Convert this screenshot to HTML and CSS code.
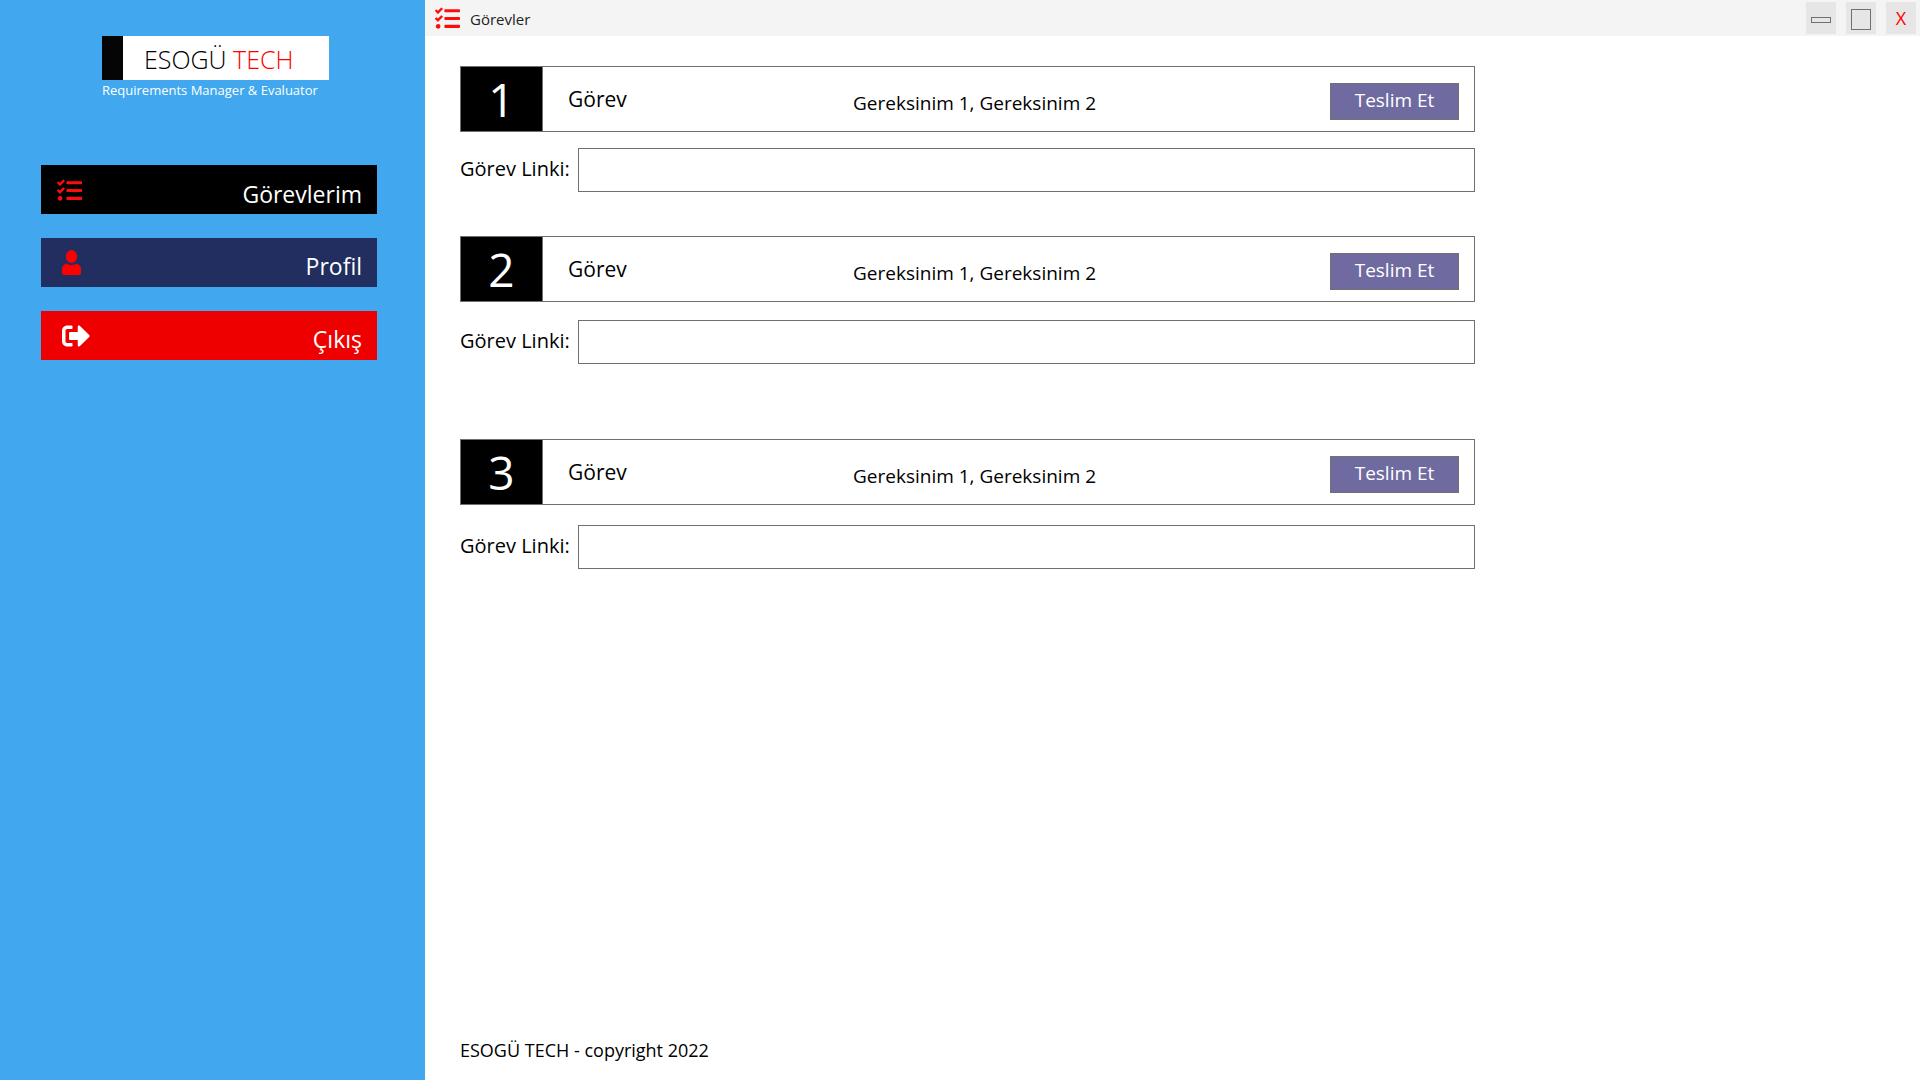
FILE: index.html
```html
<!DOCTYPE html>
<html lang="tr">
<head>
<meta charset="utf-8">
<title>Görevler</title>
<link rel="stylesheet" href="styles.css">
</head>
<body>
<svg class="sprite" aria-hidden="true">
  <symbol id="tasks" viewBox="0 0 512 512"><path d="M139.61 35.5a12 12 0 0 0-17 0L58.93 98.81l-22.7-22.12a12 12 0 0 0-17 0L3.53 92.41a12 12 0 0 0 0 17l47.59 47.4a12.78 12.78 0 0 0 17.61 0l15.59-15.62L156.52 69a12.09 12.09 0 0 0 .09-17zm0 159.19a12 12 0 0 0-17 0l-63.68 63.72-22.7-22.1a12 12 0 0 0-17 0L3.53 252a12 12 0 0 0 0 17L51 316.5a12.77 12.77 0 0 0 17.6 0l15.7-15.69 72.2-72.22a12 12 0 0 0 .09-16.9zM64 368c-26.49 0-48.59 21.5-48.59 48S37.53 464 64 464a48 48 0 0 0 0-96zm432 16H208a16 16 0 0 0-16 16v32a16 16 0 0 0 16 16h288a16 16 0 0 0 16-16v-32a16 16 0 0 0-16-16zm0-320H208a16 16 0 0 0-16 16v32a16 16 0 0 0 16 16h288a16 16 0 0 0 16-16V80a16 16 0 0 0-16-16zm0 160H208a16 16 0 0 0-16 16v32a16 16 0 0 0 16 16h288a16 16 0 0 0 16-16v-32a16 16 0 0 0-16-16z"/></symbol>
  <symbol id="user" viewBox="0 0 19 25"><ellipse cx="9.5" cy="6.5" rx="5.6" ry="6.5"/><path d="M5.2 13.8C2 13.8 0 16.2 0 19.3V22.6C0 24 .9 25 2.2 25H16.8C18.1 25 19 24 19 22.6V19.3C19 16.2 17 13.8 13.8 13.8C12.5 14.8 11 15.2 9.5 15.2S6.5 14.8 5.2 13.8Z"/></symbol>
  <symbol id="exit" viewBox="0 0 512 512"><path d="M497 273L329 441c-15 15-41 4.500-41-17v-96H152c-13.300 0-24-10.700-24-24v-96c0-13.300 10.700-24 24-24h136V88c0-21.400 25.900-32 41-17l168 168c9.300 9.400 9.300 24.600 0 34zM192 436v-40c0-6.600-5.400-12-12-12H96c-17.700 0-32-14.300-32-32V160c0-17.700 14.300-32 32-32h84c6.600 0 12-5.400 12-12V76c0-6.600-5.400-12-12-12H96c-53 0-96 43-96 96v192c0 53 43 96 96 96h84c6.600 0 12-5.400 12-12z"/></symbol>
</svg>
<div class="app">
  <aside class="sidebar">
    <div class="brand">
      <div class="logo"><span>ESOGÜ <span class="accent">TECH</span></span></div>
      <p class="tagline">Requirements Manager &amp; Evaluator</p>
    </div>
    <nav class="menu">
      <button type="button" class="item item-tasks"><svg class="icon"><use href="#tasks"/></svg><span>Görevlerim</span></button>
      <button type="button" class="item item-profile"><svg class="icon icon-user"><use href="#user"/></svg><span>Profil</span></button>
      <button type="button" class="item item-exit"><svg class="icon icon-exit"><use href="#exit"/></svg><span>Çıkış</span></button>
    </nav>
  </aside>
  <div class="window">
    <header class="titlebar">
      <svg class="icon"><use href="#tasks"/></svg>
      <h1>Görevler</h1>
      <div class="controls">
        <button type="button" aria-label="Küçült"><span class="minimize"></span></button>
        <button type="button" aria-label="Büyüt"><span class="maximize"></span></button>
        <button type="button" class="close" aria-label="Kapat">X</button>
      </div>
    </header>
    <main class="content">
      <section class="task task-1">
        <div class="card">
          <span class="number">1</span>
          <h2>Görev</h2>
          <p>Gereksinim 1, Gereksinim 2</p>
          <button type="button" class="submit">Teslim Et</button>
        </div>
        <div class="link-row"><label for="link1">Görev Linki:</label><input type="text" id="link1"></div>
      </section>
      <section class="task task-2">
        <div class="card">
          <span class="number">2</span>
          <h2>Görev</h2>
          <p>Gereksinim 1, Gereksinim 2</p>
          <button type="button" class="submit">Teslim Et</button>
        </div>
        <div class="link-row"><label for="link2">Görev Linki:</label><input type="text" id="link2"></div>
      </section>
      <section class="task task-3">
        <div class="card">
          <span class="number">3</span>
          <h2>Görev</h2>
          <p>Gereksinim 1, Gereksinim 2</p>
          <button type="button" class="submit">Teslim Et</button>
        </div>
        <div class="link-row"><label for="link3">Görev Linki:</label><input type="text" id="link3"></div>
      </section>
    </main>
    <footer class="footer">ESOGÜ TECH - copyright 2022</footer>
  </div>
</div>
</body>
</html>
```
FILE: styles.css
```css
* { box-sizing: border-box; }
body, h1, h2, p { margin: 0; font-weight: 400; }
body { font-family: "Open Sans", "Noto Sans", sans-serif; color: #000; background: #fff; }
button, input { font: inherit; border: 0; border-radius: 0; }
button { cursor: pointer; }
.sprite { display: none; }
.icon { width: 25px; height: 25px; fill: #ff0d0d; flex: none; }

.app { display: flex; min-height: 100vh; }
.sidebar { flex: 0 0 425px; padding: 36px 48px 36px 41px; background: #41a8ef; }
.brand { margin-left: 61px; }
.logo {
  display: flex; align-items: center; width: 227px; height: 44px;
  padding: 2px 0 0 21px; border-left: 21px solid #050505;
  background: #fff; font-size: 25px; line-height: 32px; font-weight: 300;
}
.accent { color: #f00; }
.tagline { color: #fff; font-size: 13px; line-height: 20px; white-space: nowrap; }

.menu { display: flex; flex-direction: column; gap: 24px; margin-top: 65px; }
.item {
  display: flex; align-items: center; justify-content: space-between;
  height: 49px; padding: 0 15px 0 16px; color: #fff; font-size: 23px; line-height: 32px;
}
.item span { padding-top: 6px; }
.item-tasks { background: #000; padding-top: 2px; }
.item-profile { background: #212e5f; padding-left: 21px; }
.item-exit { background: #ef0000; padding-left: 21px; }
.icon-user { width: 19px; fill: #f00; }
.icon-exit { width: 28px; height: 28px; fill: #fff; }

.window { flex: 1; min-width: 0; display: flex; flex-direction: column; }
.titlebar {
  display: flex; align-items: center; gap: 10px;
  height: 36px; padding: 0 4px 0 10px; background: #f4f4f4;
}
.titlebar h1 { font-size: 15px; line-height: 20px; color: #222; padding-top: 2px; }
.controls { display: flex; gap: 10px; margin-left: auto; }
.controls button {
  display: flex; align-items: center; justify-content: center;
  width: 30px; height: 32px; padding: 0; background: #e6e6e6;
}
.minimize, .maximize { width: 20px; border: 1px solid #707070; }
.minimize { height: 6px; margin-top: 4px; }
.maximize { height: 21px; margin-top: 2px; }
.controls .close { color: #f00; font-size: 18px; line-height: 24px; }

.content { flex: 1; width: 100%; max-width: 1085px; padding: 30px 35px 0; }
.task { display: flex; flex-direction: column; margin-bottom: 44px; }
.task-1 { gap: 16px; }
.task-2 { gap: 18px; margin-bottom: 75px; }
.task-3 { gap: 20px; }
.card {
  display: grid; grid-template-columns: 82px 310px 1fr 129px; align-items: center;
  height: 66px; padding-right: 15px; border: 1px solid #707070;
}
.number {
  align-self: stretch; display: flex; align-items: center; justify-content: center;
  border-right: 1px solid #707070; background: #000; color: #fff; font-size: 46px; line-height: 60px;
}
.card h2 { padding-left: 25px; font-size: 21px; line-height: 28px; }
.card p { padding-top: 8px; font-size: 19px; line-height: 28px; }
.submit {
  height: 37px; margin-top: 4px; padding: 0 0 3px; border: 1px solid #707070;
  background: #6f6ba1; color: #fff; font-size: 19px; line-height: 28px;
}
.link-row { display: flex; align-items: center; }
.link-row label { flex: 0 0 118px; padding-bottom: 2px; font-size: 20px; line-height: 28px; }
.link-row input {
  flex: 1; min-width: 0; height: 44px; padding: 0 10px;
  border: 1px solid #707070; background: #fff; font-size: 20px;
}
.footer { padding: 0 35px 17px; font-size: 18px; line-height: 26px; }
```
